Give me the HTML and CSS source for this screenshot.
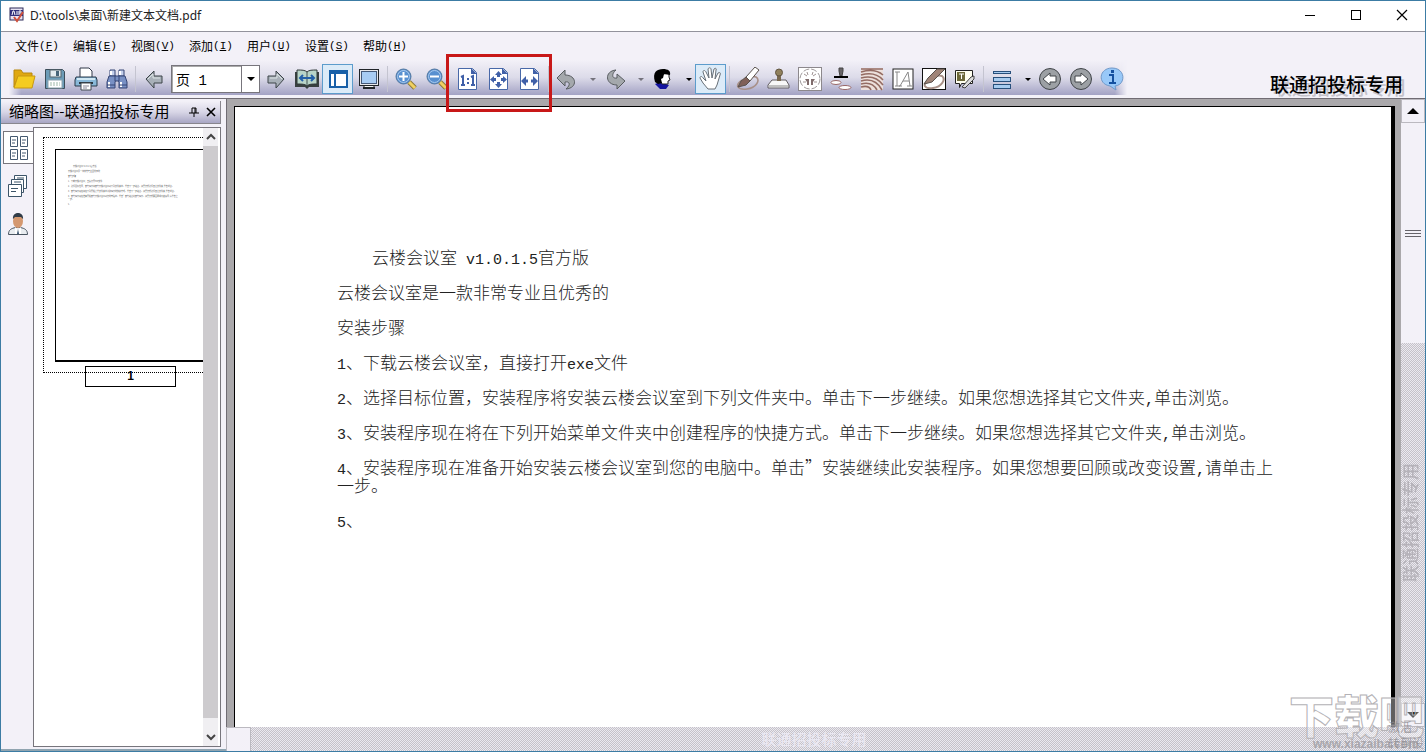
FILE: index.html
```html
<!DOCTYPE html>
<html lang="zh-CN">
<head>
<meta charset="utf-8">
<title>D:\tools\桌面\新建文本文档.pdf</title>
<link rel="stylesheet" href="styles.css">
</head>
<body>
<div class="window">
  <header class="titlebar">
    <svg class="app-icon" width="16" height="16" viewBox="0 0 16 16"><rect x="1" y="1" width="13" height="12" fill="#e8e4f4" stroke="#2c2a58"/><path d="M1 3h13v6H1z" fill="#32307c"/><path d="M3 8l1-4h1l1 4M8 4v4M10 8V4h2v2h-2" stroke="#fff" fill="none"/><path d="M5 10l3 4 6-9" stroke="#d0503c" stroke-width="2" fill="none"/></svg>
    <h1 class="title">D:\tools\桌面\新建文本文档.pdf</h1>
    <div class="win-buttons">
      <button class="win-btn" aria-label="最小化"><svg width="12" height="12"><path d="M1 6.500h10" stroke="#000"/></svg></button>
      <button class="win-btn" aria-label="最大化"><svg width="12" height="12"><rect x="1.500" y="1.500" width="9" height="9" fill="none" stroke="#000"/></svg></button>
      <button class="win-btn" aria-label="关闭"><svg width="12" height="12"><path d="M1 1l10 10M11 1L1 11" stroke="#000" stroke-width="1.200"/></svg></button>
    </div>
  </header>

  <nav class="menubar">
    <button class="menu">文件<span class="key">(<u>F</u>)</span></button>
    <button class="menu">编辑<span class="key">(<u>E</u>)</span></button>
    <button class="menu">视图<span class="key">(<u>V</u>)</span></button>
    <button class="menu">添加<span class="key">(<u>I</u>)</span></button>
    <button class="menu">用户<span class="key">(<u>U</u>)</span></button>
    <button class="menu">设置<span class="key">(<u>S</u>)</span></button>
    <button class="menu">帮助<span class="key">(<u>H</u>)</span></button>
  </nav>

  <div class="toolrow">
    <div class="toolbar">
      <button class="tool" aria-label="打开"><svg width="24" height="24" viewBox="0 0 24 24"><path d="M2 3h7l2 3h9v4H6L2 20z" fill="#e0a810" stroke="#b8880c"/><path d="M2 21L6 9h17l-3 12z" fill="#f4cc20" stroke="#c89810"/></svg></button>
      <button class="tool" aria-label="保存"><svg width="24" height="24" viewBox="0 0 24 24"><path d="M2.500 2.500h17l2 2v17h-19z" fill="#6c9cb8" stroke="#3c4c58"/><rect x="7" y="3" width="11" height="7" fill="#e4ecf0" stroke="#54646c"/><rect x="13" y="4" width="3" height="5" fill="#466478"/><rect x="5" y="13" width="14" height="8" fill="#fff" stroke="#8ca4b0"/><path d="M7 16h10M7 18h10" stroke="#9cb8a8" stroke-dasharray="2 1"/></svg></button>
      <button class="tool" aria-label="打印"><svg width="24" height="24" viewBox="0 0 24 24"><path d="M6 10V1h9l3 3v6" fill="#fff" stroke="#303848"/><path d="M2 10h20l1 3v6H1v-6z" fill="#88b8d8" stroke="#283848"/><path d="M3 11h18v2H3z" fill="#d0e8f4"/><path d="M5 15h14v2H5z" fill="#2c3840"/><path d="M7 16h10v7H7z" fill="#fff" stroke="#404850"/><path d="M9 19h6M9 21h4" stroke="#889"/></svg></button>
      <button class="tool" aria-label="查找"><svg width="24" height="24" viewBox="0 0 24 24"><g fill="#7890c4" stroke="#344474"><path d="M5 3h5v6H5zM14 3h5v6h-5z" fill="#c4d0ec"/><path d="M4 9h7v4l-1 2v6H2v-6zM13 9h7l2 6v6h-8v-6l-1-2z"/><path d="M10 9h4v5h-4z"/></g><path d="M6 4v4M15 4v4M4 15v5M16 15v5" stroke="#fff" stroke-width="2"/><path d="M2 18h8M14 18h8" stroke="#344474"/></svg></button>
      <span class="sep"></span>
      <button class="tool" aria-label="上一页"><svg width="24" height="24" viewBox="0 0 24 24"><path d="M4 12l8-8v5h8v7h-8v5z" fill="#a8b0b8" stroke="#3c4448"/><path d="M6 12l5-5v4h7" fill="none" stroke="#dce4e4"/></svg></button>
      <div class="combo"><input class="combo-text" type="text" value="页 1" aria-label="页码"><button class="combo-btn" aria-label="选择页码"><i class="caret"></i></button></div>
      <button class="tool" aria-label="下一页"><svg width="24" height="24" viewBox="0 0 24 24"><path d="M20 12l-8-8v5H4v7h8v5z" fill="#a8b0b8" stroke="#3c4448"/><path d="M18 12l-5-5v4H6" fill="none" stroke="#dce4e4"/></svg></button>
      <button class="tool" aria-label="双页"><svg width="24" height="24" viewBox="0 0 24 24"><path d="M0 5v15h10l2 2 2-2h10V5z" fill="#384040"/><path d="M2 3c5 0 8 0 10 2 2-2 5-2 10-2v14c-5 0-8 0-10 2-2-2-5-2-10-2z" fill="#b8d4c8" stroke="#303838"/><path d="M12 5v14" stroke="#405050"/><path d="M5 11h14M8 8l-3 3 3 3M16 8l3 3-3 3" fill="none" stroke="#2460a8" stroke-width="2"/></svg></button>
      <button class="tool tool-on" aria-label="侧栏" aria-pressed="true"><svg width="24" height="24" viewBox="0 0 24 24"><rect x="4" y="4" width="17" height="16" fill="#fff" stroke="#1860a8" stroke-width="2"/><path d="M3 3h19v4H3z" fill="#1860a8"/><path d="M9 7v13" stroke="#1860a8" stroke-width="2"/></svg></button>
      <button class="tool" aria-label="全屏"><svg width="24" height="24" viewBox="0 0 24 24"><rect x="2.500" y="2.500" width="19" height="16" fill="#e8e8ec" stroke="#202428"/><rect x="4.500" y="4.500" width="15" height="12" fill="#a8ccf4" stroke="#445878"/><path d="M7 18.500h10v2H7z" fill="#f4f4f4" stroke="#202428"/><path d="M6 21h12" stroke="#202428" stroke-width="2"/></svg></button>
      <span class="sep"></span>
      <button class="tool" aria-label="放大"><svg width="24" height="24" viewBox="0 0 24 24"><path d="M15 15l6 6" stroke="#8c7838" stroke-width="5"/><path d="M15 15l6 6" stroke="#f0d060" stroke-width="3"/><circle cx="9.500" cy="9.500" r="7.500" fill="#5890d0" stroke="#5478a0"/><circle cx="9.500" cy="9.500" r="6" fill="none" stroke="#a8c8ec"/><path d="M5 9.500h9M9.500 5v9" stroke="#fff" stroke-width="2"/></svg></button>
      <button class="tool" aria-label="缩小"><svg width="24" height="24" viewBox="0 0 24 24"><path d="M15 15l6 6" stroke="#8c7838" stroke-width="5"/><path d="M15 15l6 6" stroke="#f0d060" stroke-width="3"/><circle cx="9.500" cy="9.500" r="7.500" fill="#5890d0" stroke="#5478a0"/><circle cx="9.500" cy="9.500" r="6" fill="none" stroke="#a8c8ec"/><path d="M5 9.500h9" stroke="#fff" stroke-width="2"/></svg></button>
      <button class="tool" aria-label="实际大小"><svg width="24" height="24" viewBox="0 0 24 24"><path d="M2.500 1.500h14l4 4v17h-18z" fill="#fff" stroke="#4868a8"/><path d="M15 1l6 6h-6z" fill="#4060a8"/><path d="M5 10l2-1v9M5 18h4M15 10l2-1v9M15 18h4" fill="none" stroke="#4060a8" stroke-width="2"/><path d="M11 11h2v2h-2zM11 15h2v2h-2z" fill="#4060a8"/></svg></button>
      <button class="tool" aria-label="适合页面"><svg width="24" height="24" viewBox="0 0 24 24"><path d="M2.500 1.500h14l4 4v17h-18z" fill="#fff" stroke="#4868a8"/><path d="M15 1l6 6h-6z" fill="#4060a8"/><path d="M11.500 4l3.500 4h-7zM11.500 21l3.500-4H8zM3 12.500L7 9v7zM20 12.500L16 9v7z" fill="#4060a8"/><path d="M11.500 7v3M11.500 15v3M6 12.500h3M14 12.500h3" stroke="#4060a8" stroke-width="3"/></svg></button>
      <button class="tool" aria-label="适合宽度"><svg width="24" height="24" viewBox="0 0 24 24"><path d="M2.500 1.500h14l4 4v17h-18z" fill="#fff" stroke="#4868a8"/><path d="M15 1l6 6h-6z" fill="#4060a8"/><path d="M3 14l5-5v10zM20 14l-5-5v10z" fill="#4060a8"/><path d="M7 14h3M13 14h3" stroke="#4060a8" stroke-width="3"/></svg></button>
      <span class="sep"></span>
      <button class="tool" aria-label="撤销"><svg width="24" height="24" viewBox="0 0 24 24"><path d="M2 11l8-8v5c12 0 13 13 1 14 4-3 5-8-1-7v4z" fill="#a4a8ac" stroke="#585c60" stroke-linejoin="round"/></svg></button>
      <button class="drop" aria-label="撤销列表"><i class="caret caret-off"></i></button>
      <button class="tool" aria-label="重做"><svg width="24" height="24" viewBox="0 0 24 24"><path d="M22 14l-8 8v-4C2 18 1 4 13 3c-4 3-5 9 1 8V7z" fill="#a4a8ac" stroke="#585c60" stroke-linejoin="round"/></svg></button>
      <button class="drop" aria-label="重做列表"><i class="caret caret-off"></i></button>
      <button class="tool" aria-label="用户"><svg width="24" height="24" viewBox="0 0 24 24"><path d="M4 17l5-2 9 3-3 4H9z" fill="#1414a0"/><path d="M12 7l6-1v4l1 3-2 1v3h-6l-3-5z" fill="#fff" stroke="#222"/><path d="M4 15C1 5 6 2 12 2c5 0 8 2 7 6l-6-1-1 4-2 1 1 4-4 1z" fill="#000"/></svg></button>
      <button class="drop" aria-label="用户列表"><i class="caret"></i></button>
      <button class="tool tool-on" aria-label="手形" aria-pressed="true"><svg width="24" height="24" viewBox="0 0 24 24"><path d="M9 22l-5-6-3-5c0-2 2-2 3 0l3 3L4 5c0-2 2-2 3 0l3 6-1-9c1-2 3-1 3 0l1 9 2-9c1-1 3-1 2 1l-1 9 3-6c2-1 3 0 2 2l-3 10-2 4z" fill="#fff" stroke="#687078"/></svg></button>
      <span class="sep"></span>
      <button class="tool" aria-label="手写"><svg width="24" height="24" viewBox="0 0 24 24"><path d="M6 13c-8 6-4 10 5 9 9-1 14-9 9-12-3-1-6 0-8 2" fill="none" stroke="#a89088" stroke-width="1.600"/><path d="M10 10L19 0l4 3-9 11z" fill="#fff" stroke="#58504c"/><path d="M2 20l3-6 5-4 4 4-4 4z" fill="#806058" stroke="#58504c"/></svg></button>
      <button class="tool" aria-label="盖章"><svg width="24" height="24" viewBox="0 0 24 24"><path d="M5 13h14l3 5v3H1v-3z" fill="#f8f8f8" stroke="#605c60"/><path d="M2 19h20" stroke="#888"/><path d="M10 8h4v6h-4z" fill="#786850"/><circle cx="12" cy="5.500" r="3.500" fill="#90805c" stroke="#605440"/></svg></button>
      <button class="tool" aria-label="印章验证"><svg width="24" height="24" viewBox="0 0 24 24"><rect x=".5" y=".5" width="23" height="23" fill="#fff" stroke="#8c888c"/><circle cx="12" cy="12" r="10" fill="none" stroke="#a09a9c" stroke-dasharray="6 2"/><path d="M6 7l3 2M18 7l-3 2M9 5l1 3M15 5l-1 3M5 15h3M16 15h3" fill="none" stroke="#a09494"/><path d="M7 12h4v6H9v-3zM17 12h-4v6h2v-3z" fill="#806c6c"/></svg></button>
      <button class="tool" aria-label="批量盖章"><svg width="24" height="24" viewBox="0 0 24 24"><path d="M10 1h4v3l-1 5h-2l-1-5z" fill="#686468" stroke="#444"/><path d="M5 10h14" stroke="#000" stroke-width="2"/><ellipse cx="7" cy="15.500" rx="5" ry="2" fill="#fff" stroke="#986868"/><ellipse cx="16" cy="20.500" rx="6" ry="2" fill="#fff" stroke="#986868"/></svg></button>
      <button class="tool" aria-label="指纹"><svg width="24" height="24" viewBox="0 0 24 24"><rect x="1" y="1" width="22" height="22" fill="#ece0dc"/><g fill="none" stroke="#946c64" stroke-width="1.600"><path d="M1 2h22M1 5q14-4 22 3M1 8q14-4 22 5M1 11q14-4 22 7M1 14q14-4 21 9M1 17q11-3 16 6M1 20q8-2 10 3"/></g></svg></button>
      <button class="tool" aria-label="文字"><svg width="24" height="24" viewBox="0 0 24 24"><rect x="2" y="2" width="20" height="20" fill="#fff" stroke="#222"/><path d="M4 5h5M6 5v14M4 19h5M9 19L17 5l2 14M12 14h6M8 19h3M16 19h5" fill="none" stroke="#888"/></svg></button>
      <button class="tool" aria-label="手写框"><svg width="24" height="24" viewBox="0 0 24 24"><rect x=".5" y="1.500" width="23" height="21" fill="#fff" stroke="#111"/><path d="M7 13c-8 5-4 9 4 8 9-1 13-9 9-12-3-1-6 0-8 2" fill="none" stroke="#a89088" stroke-width="2"/><path d="M2 17l4-6 9-9h8L10 15z" fill="#a08478" stroke="#58504c"/></svg></button>
      <button class="tool" aria-label="文字标注"><svg width="24" height="24" viewBox="0 0 24 24"><path d="M2.500 3.500h17v13h-11l-2 4v-4h-4z" fill="#fffff0" stroke="#222"/><rect x="4" y="5" width="8" height="9" fill="#6c6838"/><path d="M6 7h5M8.500 7v5" stroke="#fff"/><path d="M9 20l9-10 3-1v3L12 21z" fill="#ddd" stroke="#444"/></svg></button>
      <span class="sep"></span>
      <button class="tool" aria-label="布局"><svg width="24" height="24" viewBox="0 0 24 24"><g fill="#a8ccf0" stroke="#28507c"><rect x="3.500" y="4.500" width="17" height="2"/><rect x="3.500" y="10.500" width="17" height="4"/><rect x="3.500" y="17.500" width="17" height="4"/></g></svg></button>
      <button class="drop" aria-label="布局列表"><i class="caret"></i></button>
      <button class="tool" aria-label="后退"><svg width="24" height="24" viewBox="0 0 24 24"><circle cx="12" cy="12" r="10.500" fill="#9ca0a4" stroke="#404448"/><path d="M5 12l7-6v3h6v6h-6v3z" fill="#fff" stroke="#404448"/></svg></button>
      <button class="tool" aria-label="前进"><svg width="24" height="24" viewBox="0 0 24 24"><circle cx="12" cy="12" r="10.500" fill="#9ca0a4" stroke="#404448"/><path d="M19 12l-7-6v3H6v6h6v3z" fill="#fff" stroke="#404448"/></svg></button>
      <button class="tool" aria-label="关于"><svg width="24" height="24" viewBox="0 0 24 24"><path d="M12 1c14 0 14 17 3 18l1 4-6-4C-3 17-1 1 12 1z" fill="#98c8f8" stroke="#7098c8"/><path d="M11 3h3v3h-3z" fill="#1450a0"/><path d="M9 8h4v8M9 16h7" fill="none" stroke="#1450a0" stroke-width="2"/></svg></button>
    </div>
    <strong class="brand">联通招投标专用</strong>
  </div>

  <main class="workspace">
    <aside class="side">
      <div class="side-head">
        <h2 class="side-title">缩略图--联通招投标专用</h2>
        <button class="mini" aria-label="固定"><svg width="10" height="10"><path d="M3 6V1h4v5M6 1v5M0 6h10M5 6v4" stroke="#000" fill="none"/></svg></button>
        <button class="mini" aria-label="关闭面板"><svg width="10" height="10"><path d="M1 1l8 8M9 1L1 9" stroke="#000" stroke-width="1.600"/></svg></button>
      </div>
      <div class="side-body">
        <div class="tabs">
          <button class="tab tab-on" aria-label="缩略图"><svg width="20" height="26" viewBox="0 0 20 26"><g fill="#fff" stroke="#445870"><path d="M1.500 1.500h7v10h-7zM11.500 1.500h7v10h-7zM1.500 14.500h7v10h-7zM11.500 14.500h7v10h-7z"/><path d="M3 5h4M3 8h3M13 5h4M13 8h3M3 18h4M3 21h3M13 18h4M13 21h3"/></g></svg></button>
          <button class="tab" aria-label="书签"><svg width="20" height="24" viewBox="0 0 20 24"><g fill="#fff" stroke="#3c5468"><path d="M6.500 1.500h12v13h-12z"/><path d="M3.500 5.500h12v13h-12z"/><path d="M.5 10.500h13v12H.5z"/><path d="M3 14.500h7M3 17.500h5M6 8h7M9 4h7"/></g></svg></button>
          <button class="tab" aria-label="签名"><svg width="20" height="24" viewBox="0 0 20 24"><path d="M.5 22.500c0-5 3-6 7-7h5c4 1 7 2 7 7z" fill="#e8ecf0" stroke="#485460"/><path d="M7 15l3 3 3-3v7H7z" fill="#fff"/><path d="M10 17l1 5H9z" fill="#34506c"/><ellipse cx="10" cy="9" rx="5" ry="7" fill="#d49870"/><path d="M5 7c-1-8 11-8 10 0l-2-2H7z" fill="#303c48"/></svg></button>
        </div>
        <div class="thumbs">
          <div class="thumb-view">
            <div class="thumb-frame">
              <div class="thumb-page" aria-hidden="true">
                <p class="tp-first">云楼会议室 v1.0.1.5官方版</p>
                <p>云楼会议室是一款非常专业且优秀的</p>
                <p>安装步骤</p>
                <p>1、下载云楼会议室，直接打开exe文件</p>
                <p>2、选择目标位置，安装程序将安装云楼会议室到下列文件夹中。单击下一步继续。如果您想选择其它文件夹,单击浏览。</p>
                <p>3、安装程序现在将在下列开始菜单文件夹中创建程序的快捷方式。单击下一步继续。如果您想选择其它文件夹,单击浏览。</p>
                <p>4、安装程序现在准备开始安装云楼会议室到您的电脑中。单击”安装继续此安装程序。如果您想要回顾或改变设置,请单击上<br>一步。</p>
                <p>5、</p>
              </div>
            </div>
            <span class="thumb-label">1</span>
          </div>
          <div class="thumb-scroll">
            <button class="ts-btn" aria-label="向上"><svg width="10" height="8"><path d="M1 6l4-4 4 4" stroke="#444" stroke-width="2" fill="none"/></svg></button>
            <span class="ts-thumb"></span>
            <button class="ts-btn" aria-label="向下"><svg width="10" height="8"><path d="M1 2l4 4 4-4" stroke="#444" stroke-width="2" fill="none"/></svg></button>
          </div>
        </div>
      </div>
    </aside>

    <section class="viewer">
      <div class="canvas">
        <article class="page">
          <p class="indent">云楼会议室<span class="lat"> v1.0.1.5</span>官方版</p>
          <p>云楼会议室是一款非常专业且优秀的</p>
          <p>安装步骤</p>
          <p><span class="lat">1</span>、下载云楼会议室，直接打开<span class="lat">exe</span>文件</p>
          <p><span class="lat">2</span>、选择目标位置，安装程序将安装云楼会议室到下列文件夹中。单击下一步继续。如果您想选择其它文件夹<span class="lat">,</span>单击浏览。</p>
          <p><span class="lat">3</span>、安装程序现在将在下列开始菜单文件夹中创建程序的快捷方式。单击下一步继续。如果您想选择其它文件夹<span class="lat">,</span>单击浏览。</p>
          <p><span class="lat">4</span>、安装程序现在准备开始安装云楼会议室到您的电脑中。单击”安装继续此安装程序。如果您想要回顾或改变设置<span class="lat">,</span>请单击上<br>一步。</p>
          <p><span class="lat">5</span>、</p>
        </article>
      </div>
      <div class="hscroll"><span class="h-thumb"></span><span class="h-track">联通招投标专用</span></div>
    </section>
    <div class="vscroll">
      <button class="v-btn" aria-label="向上滚动"><svg width="12" height="6"><path d="M0 6l6-6 6 6z"/></svg></button>
      <span class="v-thumb"><i class="grip"></i></span>
      <span class="v-track">联通招投标专用</span>
      <button class="v-btn" aria-label="向下滚动"><svg width="12" height="6"><path d="M0 0l6 6 6-6z"/></svg></button>
      <span class="v-corner"></span>
    </div>
  </main>

  <div class="marker"></div>
  <div class="watermark"><span class="wm-name">下载吧</span><span class="wm-url">www.xiazaiba.com</span></div>
  <div class="activate">激活<br>转到设</div>
</div>
</body>
</html>
```
FILE: styles.css
```css
* { box-sizing: border-box; }
body {
  margin: 0;
  font-family: "Noto Sans", "Noto Sans CJK SC", sans-serif;
  font-size: 12px;
  color: #000;
}
button {
  padding: 0;
  border: 0;
  background: none;
  color: inherit;
  font: inherit;
}
p, h1, h2 { margin: 0; }
svg { display: block; }

.window {
  position: relative;
  display: flex;
  flex-direction: column;
  height: 100vh;
  overflow: hidden;
  border: 1px solid #3c7ca4;
  background: #f3f1f8;
}

/* Title bar */
.titlebar {
  display: flex;
  align-items: center;
  height: 31px;
  padding: 0 0 2px 8px;
  background: #fff;
  border-bottom: 1px solid #92929c;
}
.title {
  flex: 1;
  margin-left: 5px;
  color: #222;
  font-size: 12px;
  font-weight: 400;
}
.win-buttons { display: flex; }
.win-btn {
  display: grid;
  place-items: center;
  width: 46px;
  height: 28px;
}

/* Menu */
.menubar {
  display: flex;
  align-items: center;
  gap: 14px;
  height: 28px;
  padding-left: 14px;
}
.menu {
  display: flex;
  align-items: center;
  width: 44px;
  font-family: "Noto Sans CJK SC", sans-serif;
  line-height: 16px;
}
.key {
  font-family: "Liberation Mono", monospace;
  font-size: 11px;
}

/* Toolbar */
.toolrow {
  display: flex;
  align-items: flex-start;
  height: 39px;
  border-bottom: 1px solid #706c74;
}
.toolbar {
  position: relative;
  z-index: 0;
  display: flex;
  align-items: center;
  height: 35px;
  padding: 3px 0 0 7px;
}
.toolbar::before {
  content: "";
  position: absolute;
  z-index: -1;
  inset: 0 0 0 8px;
  background: linear-gradient(#f3f1f8, #dcdbe9 50%, #a3a2c4);
  mask-image: linear-gradient(90deg, transparent, #000 12px, #000 calc(100% - 12px), transparent);
}
.tool {
  display: grid;
  place-items: center;
  width: 31px;
  height: 30px;
}
.tool-on {
  border: 1px solid #5c9ccc;
  background: #dcebf8;
}
.sep {
  width: 6px;
  height: 26px;
  background: linear-gradient(#c4c4d0, #c4c4d0) center / 1px 100% no-repeat;
}
.drop {
  display: flex;
  align-items: center;
  justify-content: flex-end;
  width: 17px;
  height: 30px;
  padding-right: 3px;
}
.caret {
  border: 3px solid transparent;
  border-top-color: #000;
  border-bottom: 0;
}
.caret-off { border-top-color: #74727c; }
.combo {
  display: flex;
  width: 89px;
  height: 28px;
  margin: 0 0 0 2px;
  border: 1px solid #77757c;
  background: #fff;
}
.combo-text {
  flex: 1;
  min-width: 0;
  padding: 0 0 2px 3px;
  border: 0;
  border-top: 1px solid #aaa;
  border-left: 1px solid #aaa;
  outline: 0;
  background: none;
  font: 14px "Liberation Mono", "Noto Sans CJK SC", monospace;
}
.combo-btn {
  display: grid;
  place-items: center;
  width: 18px;
  border-left: 1px solid #77757c;
}
.combo-btn .caret {
  border-width: 4px;
  border-bottom-width: 0;
}
.brand {
  margin: 11px 22px 0 auto;
  font: 500 19px/26px "Noto Sans CJK SC", sans-serif;
  text-shadow: 3px 3px 0 #c4c2ca;
}

/* Work area */
.workspace {
  display: flex;
  flex: 1;
  min-height: 0;
}
.side {
  display: flex;
  flex-direction: column;
  width: 225px;
  padding: 2px 5px 0 0;
  border-bottom: 2px solid #90a4b0;
}
.side-head {
  display: flex;
  align-items: center;
  gap: 7px;
  height: 23px;
  padding: 0 4px 0 8px;
  border-right: 1px solid #88868e;
  border-bottom: 1px solid #88868e;
  background: linear-gradient(#f3f1f8, #d8d6e6 50%, #a8a6c4);
}
.side-title {
  flex: 1;
  padding-bottom: 2px;
  font: 400 15px/20px "Noto Sans CJK SC", sans-serif;
}
.side-body {
  display: flex;
  flex: 1;
  min-height: 0;
  padding: 3px 0 2px;
}
.tabs {
  display: flex;
  flex-direction: column;
  gap: 5px;
  width: 32px;
  padding: 4px 0 0 2px;
}
.tab {
  display: grid;
  place-items: center;
  height: 33px;
}
.tab-on {
  border: 1px solid #77757c;
  border-right: 0;
  background: #fff;
}
.thumbs {
  display: flex;
  flex: 1;
  min-width: 0;
  padding-right: 2px;
  border: 1px solid #77757c;
  background: #fff;
}
.thumb-view {
  flex: 1;
  min-width: 0;
  overflow: hidden;
  padding: 9px 0 0 9px;
}
.thumb-frame {
  width: 174px;
  height: 236px;
  padding: 11px;
  border: 1px dotted #000;
}
.thumb-page {
  height: 213px;
  padding: 15px 0 0 12px;
  border: 1px solid #000;
  border-bottom-width: 2px;
  font: 2px/3px "Noto Sans CJK SC", sans-serif;
  color: #555;
  white-space: nowrap;
}
.thumb-page p { margin-bottom: 2px; }
.thumb-page .tp-first { padding-left: 5px; }
.thumb-label {
  display: block;
  width: 91px;
  margin: -7px 0 0 42px;
  border: 1px solid #000;
  font: 700 12px/19px "Liberation Sans", sans-serif;
  text-align: center;
}
.thumb-scroll {
  display: flex;
  flex-direction: column;
  width: 15px;
  background: #f0eff2;
}
.ts-btn {
  display: grid;
  place-items: center;
  height: 18px;
}
.ts-thumb {
  flex: 1;
  margin-bottom: 10px;
  background: #cdcbce;
}

.viewer {
  display: flex;
  flex: 1;
  flex-direction: column;
  min-width: 0;
}
.canvas {
  flex: 1;
  min-height: 0;
  padding: 7px 6px 0 7px;
  border-left: 1px solid #706c74;
  background: #aaa8ab;
}
.page {
  height: 100%;
  padding: 141px 92px 0 102px;
  border: 1px solid #000;
  border-right-width: 4px;
  border-bottom: 0;
  background: #fff;
  color: #222;
  font: 300 17px/18px "Noto Sans CJK SC", sans-serif;
  white-space: nowrap;
}
.page p { margin-bottom: 17px; }
.page .indent { padding-left: 35px; }
.lat {
  font-family: "Liberation Mono", monospace;
  font-size: 15px;
  line-height: 0;
}

/* Scroll bars */
.hscroll {
  display: flex;
  height: 24px;
}
.h-thumb {
  width: 25px;
  border: 1px solid #bbb9c0;
  border-bottom: 0;
}
.h-track, .v-track, .v-corner {
  background: repeating-conic-gradient(#c5c2c9 0 25%, #ebe9f0 0 50%) 0 0 / 2px 2px;
}
.h-track {
  flex: 1;
  padding-right: 24px;
  color: #eae8f2;
  font: 500 15px/23px "Noto Sans CJK SC", sans-serif;
  text-align: center;
}
.vscroll {
  display: flex;
  flex-direction: column;
  width: 24px;
}
.v-btn {
  display: grid;
  place-items: center;
  height: 24px;
  border: 1px solid #bbb9c0;
}
.v-thumb {
  display: grid;
  place-items: center;
  flex: 220;
}
.grip {
  width: 16px;
  height: 7px;
  background: repeating-linear-gradient(#66646a 0 1px, transparent 1px 3px);
}
.v-track {
  display: flex;
  align-items: center;
  justify-content: center;
  flex: 360;
  padding-left: 6px;
  color: #b5b2b9;
  font: 500 17px/18px "Noto Sans CJK SC", sans-serif;
  writing-mode: vertical-rl;
  text-orientation: sideways;
  transform: rotate(180deg);
}
.v-corner { height: 24px; }

/* Overlays */
.marker {
  position: absolute;
  top: 53px;
  left: 445px;
  width: 106px;
  height: 58px;
  border: 3px solid #c81818;
}
.watermark {
  position: absolute;
  right: 0;
  bottom: 0;
  display: flex;
  flex-direction: column;
  width: 136px;
}
.wm-name {
  color: #ffffff66;
  font: 900 45px/46px "Noto Sans CJK SC", sans-serif;
  -webkit-text-stroke: 1px #b4b2b6;
}
.wm-url {
  padding-left: 24px;
  color: #a8a6ac;
  font: 700 12px/13px "Liberation Sans", sans-serif;
}
.activate {
  position: absolute;
  right: 0;
  bottom: 0;
  width: 37px;
  color: #8c8a90;
  font: 300 12px/16px "Noto Sans CJK SC", sans-serif;
  white-space: nowrap;
}
```
